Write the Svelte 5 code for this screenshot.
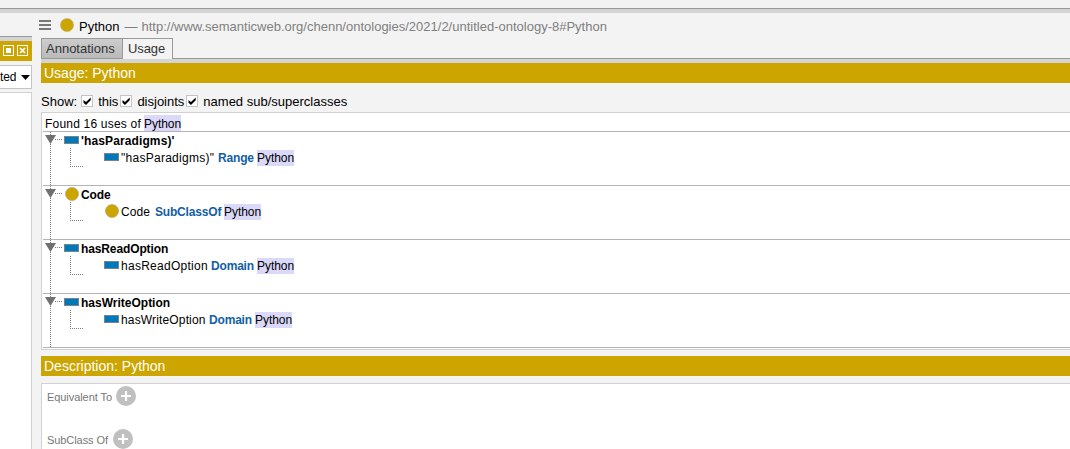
<script>
  const rows = [
    { name: "'hasParadigms)'", child: '"hasParadigms)"', key: 'Range', kind: 'prop', ls: 0.12, cw: 97, kw: 39, cs: 0.27 },
    { name: 'Code', child: 'Code', key: 'SubClassOf', kind: 'class', ls: -0.1, cw: 34, kw: 69, cs: 0.1 },
    { name: 'hasReadOption', child: 'hasReadOption', key: 'Domain', kind: 'prop', ls: -0.12, cw: 90, kw: 46, cs: 0.27 },
    { name: 'hasWriteOption', child: 'hasWriteOption', key: 'Domain', kind: 'prop', ls: 0, cw: 88, kw: 46, cs: 0.15 }
  ];
  const checks = ['this', 'disjoints', 'named sub/superclasses'];
  const sections = [
    { label: 'Equivalent To', width: 65 },
    { label: 'SubClass Of', width: 62 }
  ];
</script>

{#snippet icon(kind)}
  {#if kind === 'class'}
    <svg class="ic" width="15" height="15" viewBox="0 0 15 15"><circle cx="8" cy="7" r="6.5" fill="#cca500" stroke="#b9a873" stroke-width=".8" /></svg>
  {:else}
    <svg class="ic" width="15" height="15" viewBox="0 0 15 15"><rect x=".5" y="3.5" width="14" height="7" fill="#0079ba" stroke="#7b8188" /></svg>
  {/if}
{/snippet}

<div class="page">
  <div class="top"></div>
  <div class="cols">
    <aside>
      <div class="lefthead"></div>
      <div class="leftbar">
        <svg width="12" height="12" viewBox="0 0 12 12"><rect x=".5" y=".5" width="10" height="10" fill="none" stroke="#fff" /><rect x="3" y="3" width="5" height="5" fill="#fff" /></svg>
        <svg width="12" height="12" viewBox="0 0 12 12"><rect x=".5" y=".5" width="10" height="10" fill="none" stroke="#fff" /><path d="M3 3l5 5M8 3l-5 5" stroke="#fff" stroke-width="1.7" /></svg>
      </div>
      <div class="select"><span>ted</span><svg width="9" height="5" viewBox="0 0 9 5"><path d="M0 0h9L4.5 5z" fill="#000" /></svg></div>
      <div class="leftpane"></div>
    </aside>
    <main>
      <header>
        <svg class="menu" width="12" height="12" viewBox="0 0 12 12"><path d="M0 2h12M0 6h12M0 10h12" stroke="#777" stroke-width="2" /></svg>
        <svg class="dot" width="14" height="14" viewBox="0 0 14 14"><circle cx="7" cy="7" r="6.6" fill="#cca500" stroke="#c2b78f" stroke-width=".6" /></svg>
        <span class="name">Python</span><span class="dash">—</span><span class="url">http://www.semanticweb.org/chenn/ontologies/2021/2/untitled-ontology-8#Python</span>
      </header>
      <nav><div class="tab off">Annotations</div><div class="tab on">Usage</div><div class="rest"></div></nav>
      <div class="band"></div>
      <div class="gold">Usage: Python</div>
      <div class="show">
        <span class="lab">Show:</span>
        {#each checks as c}
          <span class="check">
            <svg width="12" height="12" viewBox="0 0 12 12"><rect x=".5" y=".5" width="11" height="11" fill="#fff" stroke="#c4c4c4" /><path d="M2.5 5v2.8L5 10 9.7 5.3V2.6L5 7z" fill="#000" /></svg>
            <span>{c}</span>
          </span>
        {/each}
      </div>
      <section class="usage">
        <div class="found"><span class="ft">Found 16 uses of</span><mark>Python</mark></div>
        {#each rows as r}
          <div class="row">
            <svg class="guides" width="62" height="53" viewBox="0 0 62 53">
              <path d="M7.5 0v53M12 7.5h8M27.5 16v18M27 34.5h13" stroke="#808080" stroke-dasharray="1 1" fill="none" />
              <path d="M2 3h11L7.5 12z" fill="#707070" />
            </svg>
            <div class="lines">
              <div class="head">{@render icon(r.kind)}<b style="letter-spacing:{r.ls}px">{r.name}</b></div>
              <div class="child">{@render icon(r.kind)}<span class="ct" style="width:{r.cw}px;letter-spacing:{r.cs}px">{r.child}</span><b class="key" style="width:{r.kw}px">{r.key}</b><mark>Python</mark></div>
            </div>
          </div>
        {/each}
        <div class="tail"></div>
      </section>
      <div class="gold second">Description: Python</div>
      <section class="desc">
        {#each sections as s}
          <div class="sec"><span style="width:{s.width}px">{s.label}</span><svg width="20" height="20" viewBox="0 0 20 20"><circle cx="10" cy="10" r="10" fill="#c0c0c0" /><path d="M10 5v10M5 10h10" stroke="#fff" stroke-width="2.2" /></svg></div>
        {/each}
      </section>
    </main>
  </div>
</div>

<style>
  :global(body) { margin: 0; overflow: hidden; }
  .page { width: 1070px; height: 449px; overflow: hidden; background: #f3f3f3; color: #000; font: 12px "Liberation Sans", Arial, sans-serif; display: flex; flex-direction: column; box-sizing: border-box; white-space: nowrap; }
  svg { display: block; flex: none; }
  .top { height: 4px; margin-top: 8px; border-top: 1px solid #999; background: #d4d4d4; flex: none; }
  .cols { display: flex; flex: 1; min-height: 0; }
  aside { width: 32px; margin-right: 9px; display: flex; flex-direction: column; flex: none; }
  .lefthead { height: 4px; margin-top: 23px; border-top: 1px solid #999; background: #d4d4d4; }
  .leftbar { height: 20px; background: #cca500; display: flex; align-items: center; gap: 2px; padding-left: 3px; box-sizing: border-box; }
  .select { height: 24px; margin-top: 4px; box-sizing: border-box; background: #fff; border: 1px solid #c4c4c4; border-left: 0; display: flex; align-items: center; justify-content: space-between; padding-right: 1px; }
  .select span { font-size: 12px; letter-spacing: -0.1px; }
  .leftpane { margin-top: 3px; flex: 1; background: #fff; border: solid #d2d2d2; border-width: 1px 1px 0 0; }
  main { flex: 1; min-width: 0; display: flex; flex-direction: column; }
  header { height: 25px; margin-left: -2px; display: flex; align-items: center; flex: none; }
  header span { font-size: 13px; line-height: 15px; padding-top: 1px; }
  .menu { margin-bottom: 1px; }
  .dot { margin-left: 9px; margin-bottom: 1px; }
  .name { margin-left: 5px; }
  .dash { color: #808080; margin-left: 5px; }
  .url { color: #808080; margin-left: 4px; }
  nav { display: flex; height: 21px; flex: none; }
  .tab { box-sizing: border-box; border: 1px solid #999; line-height: 20px; font-size: 13px; color: #333; padding-left: 4px; }
  .off { width: 82px; background: linear-gradient(#cdcdcd, #bababa); }
  .on { width: 50px; border-left: 0; border-bottom: 0; padding-left: 5px; letter-spacing: -0.1px; }
  .rest { flex: 1; border-bottom: 1px solid #999; }
  .band { height: 4px; background: #d4d4d4; flex: none; }
  .gold { height: 20px; line-height: 20px; flex: none; background: #cca500; color: #fff; font-size: 14px; padding-left: 3px; }
  .show { height: 29px; flex: none; display: flex; align-items: center; font-size: 13px; padding-top: 7px; box-sizing: border-box; }
  .lab { margin-right: 4px; }
  .check { display: flex; align-items: center; gap: 5px; margin-right: 2px; }
  .usage { height: 238px; flex: none; box-sizing: border-box; background: #fff; border: 1px solid #d2d2d2; border-right: 0; padding-left: 1px; }
  .found { height: 18px; display: flex; align-items: center; padding: 2px 0 0 2px; box-sizing: border-box; }
  .found mark, .ft { height: 16px; line-height: 18px; }
  .ft { width: 99px; letter-spacing: 0.2px; }
  mark { background: #dad9f9; color: #000; height: 16px; line-height: 17px; width: 37px; flex: none; letter-spacing: -0.05px; }
  .row { height: 53px; border-top: 1px solid #b4b4b4; display: flex; }
  .guides { margin-right: -41px; }
  .head, .child { display: flex; align-items: center; height: 17px; }
  .ic { margin-right: 2px; }
  .child { padding-left: 40px; }
  .ct, .key { flex: none; }
  .key { color: #125ea6; letter-spacing: -0.18px; }
  .tail { border-top: 1px solid #b4b4b4; }
  .second { margin-top: 6px; }
  .desc { flex: none; height: 80px; margin-top: 7px; background: #fff; border: solid #d2d2d2; border-width: 1px 0 0 1px; padding: 2px 0 0 5px; }
  .sec { height: 43px; display: flex; align-items: flex-start; gap: 4px; color: #777; font-size: 11px; line-height: 22px; letter-spacing: -0.07px; }
</style>
